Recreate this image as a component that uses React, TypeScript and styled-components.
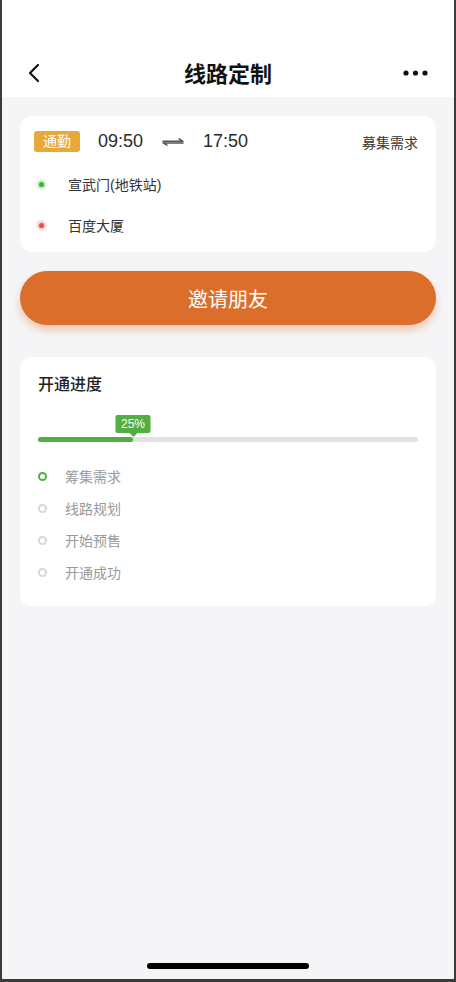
import React from "react";
import styled, { createGlobalStyle } from "styled-components";

const GlobalStyle = createGlobalStyle`
  html, body {
    margin: 0;
    padding: 0;
    background: #3b3b3b;
  }
  body {
    font-family: "Liberation Sans", "Noto Sans CJK SC", sans-serif;
    -webkit-font-smoothing: antialiased;
  }
`;

const green = "#52ae43";
const orange = "#dc6e2b";

const steps = ["筹集需求", "线路规划", "开始预售", "开通成功"];
const progress = 25;

export default function App() {
  return (
    <Frame>
      <GlobalStyle />
      <Header>
        <NavBar>
          <NavButton aria-label="back">
            <svg width="14" height="20" viewBox="0 0 14 20">
              <path d="M11 2 L3 10 L11 18" fill="none" stroke="#111" strokeWidth="2.2" strokeLinecap="round" strokeLinejoin="round" />
            </svg>
          </NavButton>
          <Title>线路定制</Title>
          <NavButton aria-label="more">
            <svg width="25" height="8" viewBox="0 0 25 8">
              <circle cx="3" cy="4" r="2.6" fill="#111" />
              <circle cx="12.5" cy="4" r="2.6" fill="#111" />
              <circle cx="22" cy="4" r="2.6" fill="#111" />
            </svg>
          </NavButton>
        </NavBar>
      </Header>

      <Content>
        <RouteCard>
          <TimeRow>
            <Tag>通勤</Tag>
            <Time>09:50</Time>
            <svg width="24" height="10" viewBox="0 0 24 10">
              <path d="M2 4.3 H22 L18 1.8" fill="none" stroke="#555" strokeWidth="1.5" strokeLinecap="round" strokeLinejoin="round" />
              <path d="M22 5.9 H2 L6 8.2" fill="none" stroke="#555" strokeWidth="1.5" strokeLinecap="round" strokeLinejoin="round" />
            </svg>
            <Time>17:50</Time>
            <Status>募集需求</Status>
          </TimeRow>
          <StopRow>
            <Dot $color="#3fae3a" $glow="rgba(63,174,58,0.35)" />
            <StopName>宣武门(地铁站)</StopName>
          </StopRow>
          <StopRow>
            <Dot $color="#e0514a" $glow="rgba(224,81,74,0.35)" />
            <StopName>百度大厦</StopName>
          </StopRow>
        </RouteCard>

        <InviteButton>邀请朋友</InviteButton>

        <ProgressCard>
          <CardTitle>开通进度</CardTitle>
          <ProgressWrap>
            <Track>
              <Fill style={{ width: `${progress}%` }} />
              <Badge style={{ left: `${progress}%` }}>{progress}%</Badge>
            </Track>
          </ProgressWrap>
          <StepList>
            {steps.map((s, i) => (
              <Step key={s}>
                <StepCircle $active={i === 0} />
                <StepText>{s}</StepText>
              </Step>
            ))}
          </StepList>
        </ProgressCard>
      </Content>

      <HomeIndicator />
    </Frame>
  );
}

const Frame = styled.div`
  box-sizing: border-box;
  width: 456px;
  height: 982px;
  border-left: 2px solid #3b3b3b;
  border-right: 2px solid #3b3b3b;
  border-bottom: 3px solid #3b3b3b;
  background: #f5f5f7;
  display: flex;
  flex-direction: column;
  overflow: hidden;
`;

const Header = styled.div`
  background: #fff;
  padding-top: 50px;
`;

const NavBar = styled.div`
  height: 47px;
  display: flex;
  align-items: center;
  justify-content: space-between;
  padding: 0 26px 0 25px;
  position: relative;
`;

const NavButton = styled.div`
  display: flex;
  align-items: center;
  height: 24px;
  margin-top: -2px;
`;

const Title = styled.div`
  position: absolute;
  left: 0;
  right: 0;
  top: 0;
  bottom: 0;
  display: flex;
  align-items: center;
  justify-content: center;
  font-size: 22px;
  font-weight: 600;
  color: #111;
  margin-top: -3px;
  pointer-events: none;
`;

const Content = styled.div`
  flex: 1;
  padding: 19px 18px 0;
  display: flex;
  flex-direction: column;
`;

const RouteCard = styled.div`
  background: #fff;
  border-radius: 12px;
  padding: 15px 18px 17px 14px;
  display: flex;
  flex-direction: column;
  gap: 22px;
`;

const TimeRow = styled.div`
  display: flex;
  align-items: center;
  gap: 18px;
  height: 21px;
`;

const Tag = styled.span`
  background: #e9a93a;
  color: #fff;
  font-size: 14px;
  line-height: 21px;
  height: 21px;
  padding: 0 9px;
  border-radius: 3px;
`;

const Time = styled.span`
  font-size: 18px;
  color: #2a2a2a;
`;

const Status = styled.span`
  margin-left: auto;
  font-size: 14px;
  color: #333;
`;

const StopRow = styled.div`
  display: flex;
  align-items: center;
  height: 20px;
  & + & {
    margin-top: -1px;
  }
`;

const Dot = styled.span<{ $color: string; $glow: string }>`
  width: 5px;
  height: 5px;
  border-radius: 50%;
  margin-left: 5px;
  background: ${(p) => p.$color};
  box-shadow: 0 0 3px 2px ${(p) => p.$glow};
`;

const StopName = styled.span`
  margin-left: 24px;
  font-size: 14px;
  color: #333;
`;

const InviteButton = styled.button`
  margin-top: 19px;
  height: 54px;
  border: none;
  border-radius: 27px;
  background: ${orange};
  color: #fff;
  font-family: inherit;
  font-size: 20px;
  box-shadow: 0 5px 8px rgba(220, 110, 43, 0.35);
`;

const ProgressCard = styled.div`
  margin-top: 32px;
  background: #fff;
  border-radius: 12px;
  padding: 19px 18px 18px;
`;

const CardTitle = styled.div`
  font-size: 16px;
  line-height: 18px;
  font-weight: 500;
  color: #222;
`;

const ProgressWrap = styled.div`
  padding-top: 43px;
`;

const Track = styled.div`
  position: relative;
  height: 5px;
  border-radius: 3px;
  background: #e2e2e4;
`;

const Fill = styled.div`
  height: 100%;
  border-radius: 3px;
  background: ${green};
`;

const Badge = styled.div`
  position: absolute;
  bottom: 9px;
  transform: translateX(-50%);
  width: 35px;
  height: 18px;
  line-height: 18px;
  border-radius: 2px;
  background: ${green};
  color: #fff;
  font-size: 12px;
  text-align: center;
  &::after {
    content: "";
    position: absolute;
    left: 50%;
    top: 100%;
    margin-left: -4px;
    border-left: 4px solid transparent;
    border-right: 4px solid transparent;
    border-top: 4px solid ${green};
  }
`;

const StepList = styled.div`
  margin-top: 18px;
  display: flex;
  flex-direction: column;
`;

const Step = styled.div`
  display: flex;
  align-items: center;
  height: 32px;
`;

const StepCircle = styled.span<{ $active: boolean }>`
  box-sizing: border-box;
  width: 9px;
  height: 9px;
  border-radius: 50%;
  border: 2px solid ${(p) => (p.$active ? green : "#d8d8d8")};
`;

const StepText = styled.span`
  margin-left: 18px;
  font-size: 14px;
  color: #999;
`;

const HomeIndicator = styled.div`
  align-self: center;
  width: 162px;
  height: 6px;
  border-radius: 3px;
  background: #000;
  margin-bottom: 10px;
`;
